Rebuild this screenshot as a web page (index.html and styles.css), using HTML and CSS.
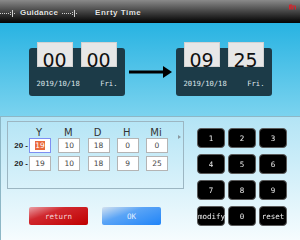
FILE: index.html
```html
<!DOCTYPE html>
<html lang="en">
<head>
    <meta charset="UTF-8">
    <title>Enrty Time</title>
    <link rel="stylesheet" href="styles.css">
</head>
<body>
    <div class="screen">
        <div class="topbar">
            <svg class="crumb" width="17" height="8" viewBox="0 0 17 8" shape-rendering="crispEdges">
                <rect x="0" y="4" width="1" height="1"/><rect x="2" y="4" width="1" height="1"/><rect x="4" y="4" width="1" height="1"/>
                <rect x="6" y="4" width="1" height="1"/><rect x="8" y="4" width="1" height="1"/>
                <rect x="10" y="3" width="1" height="1"/><rect x="10" y="5" width="1" height="1"/>
                <rect x="12" y="1" width="1" height="7"/><rect x="14" y="4" width="1" height="1"/>
            </svg>
            <span class="crumb-text">Guidance</span>
            <svg class="crumb second" width="17" height="8" viewBox="0 0 17 8" shape-rendering="crispEdges">
                <rect x="0" y="4" width="1" height="1"/><rect x="2" y="4" width="1" height="1"/><rect x="4" y="4" width="1" height="1"/>
                <rect x="6" y="4" width="1" height="1"/><rect x="8" y="4" width="1" height="1"/>
                <rect x="10" y="3" width="1" height="1"/><rect x="10" y="5" width="1" height="1"/>
                <rect x="12" y="1" width="1" height="7"/><rect x="14" y="4" width="1" height="1"/>
            </svg>
            <span class="crumb-text title">Enrty Time</span>
            <svg class="alert" width="7" height="6" viewBox="0 0 7 6">
                <path d="M0.5 5.5 V1 H3 V5.5 M1.7 1 V5.5 M4 5.5 V2 H6.5 V5.5" fill="none" stroke="#d8222a" stroke-width="1"/>
            </svg>
        </div>

        <div class="clocks">
            <div class="clock">
                <div class="tiles">
                    <div class="tile">00</div>
                    <div class="tile">00</div>
                </div>
                <div class="date"><span>2019/10/18</span><span>Fri.</span></div>
            </div>
            <svg class="arrow" width="43" height="12" viewBox="0 0 43 12">
                <rect x="0" y="4.5" width="35" height="3" fill="#000"/>
                <path d="M34 0 L43 6 L34 12 Z" fill="#000"/>
            </svg>
            <div class="clock">
                <div class="tiles">
                    <div class="tile">09</div>
                    <div class="tile">25</div>
                </div>
                <div class="date"><span>2019/10/18</span><span>Fri.</span></div>
            </div>
        </div>

        <div class="panel">
            <div class="left">
                <div class="entry">
                    <div class="entry-row head">
                        <span></span>
                        <span class="col">Y</span><span class="col">M</span><span class="col">D</span><span class="col">H</span><span class="col">Mi</span>
                    </div>
                    <div class="entry-row">
                        <span class="prefix">20 -</span>
                        <div class="field focus"><span class="sel">19</span></div>
                        <div class="field">10</div>
                        <div class="field">18</div>
                        <div class="field">0</div>
                        <div class="field">0</div>
                    </div>
                    <div class="entry-row second">
                        <span class="prefix">20 -</span>
                        <div class="field">19</div>
                        <div class="field">10</div>
                        <div class="field">18</div>
                        <div class="field">9</div>
                        <div class="field">25</div>
                    </div>
                    <span class="pointer"></span>
                </div>
                <div class="actions">
                    <button class="btn return">return</button>
                    <button class="btn ok">OK</button>
                </div>
            </div>

            <div class="keypad">
                <button class="key">1</button>
                <button class="key">2</button>
                <button class="key">3</button>
                <button class="key">4</button>
                <button class="key">5</button>
                <button class="key">6</button>
                <button class="key">7</button>
                <button class="key">8</button>
                <button class="key">9</button>
                <button class="key">modify</button>
                <button class="key">0</button>
                <button class="key">reset</button>
            </div>
        </div>
    </div>
</body>
</html>
```

FILE: styles.css
```css
body {
    margin: 0;
    padding: 0;
    font-family: "DejaVu Sans", sans-serif;
}
.screen {
    width: 300px;
    height: 240px;
    overflow: hidden;
}

/* title bar */
.topbar {
    height: 23px;
    box-sizing: border-box;
    padding-top: 2px;
    display: flex;
    align-items: center;
    background: linear-gradient(#8a8a8a, #444 50%, #101010 88%, #050505);
}
.crumb {
    fill: #cfcfcf;
    flex-shrink: 0;
}
.crumb.second {
    margin-left: 4px;
}
.crumb-text {
    font-family: "Liberation Sans", sans-serif;
    font-weight: bold;
    font-size: 8px;
    letter-spacing: 0.2px;
    color: #e6e6e6;
    text-shadow: 0 0 1px #000;
    margin-left: 3px;
}
.crumb-text.title {
    margin-left: 16px;
    letter-spacing: 0.5px;
}
.alert {
    margin-left: auto;
    margin-right: 4px;
    align-self: flex-start;
    margin-top: 2px;
}

/* clocks */
.clocks {
    height: 93px;
    box-sizing: border-box;
    padding-top: 25px;
    display: flex;
    justify-content: center;
    align-items: flex-start;
    gap: 4px;
    background: linear-gradient(#28b3e2, #7bd3ef);
}
.clock {
    width: 96px;
    height: 48px;
    box-sizing: border-box;
    background-color: #1c3b48;
    border-radius: 3px;
}
.tiles {
    display: flex;
    gap: 8px;
    padding: 0 8px;
    margin-top: -6px;
}
.tile {
    width: 36px;
    height: 25px;
    box-sizing: border-box;
    padding-top: 5px;
    line-height: 25px;
    text-align: center;
    font-size: 19px;
    color: #111;
    background-color: #e7e7e7;
    border: 1px solid #d2d2d2;
}
.date {
    display: flex;
    justify-content: space-between;
    padding: 0 7px 0 8px;
    margin-top: 12px;
    line-height: 10px;
    font-family: "DejaVu Sans Mono", monospace;
    font-size: 7.2px;
    color: #dfe6ea;
}
.arrow {
    margin-top: 18px;
}

/* lower panel */
.panel {
    height: 124px;
    box-sizing: border-box;
    border-top: 1px solid #8db7c6;
    border-left: 1px solid #8db7c6;
    display: flex;
    background: linear-gradient(#b3e4f5, #f6fcfe);
}
.left {
    width: 183px;
    padding: 4px 0 0 6px;
    box-sizing: border-box;
}
.entry {
    position: relative;
    width: 177px;
    height: 68px;
    box-sizing: border-box;
    border: 1px solid #9cb6c2;
    padding: 5px 0 0 0;
}
.entry-row {
    display: grid;
    grid-template-columns: 21px repeat(5, 29.25px);
    height: 15px;
    align-items: center;
}
.entry-row.head {
    height: 11px;
}
.entry-row.second {
    margin-top: 3px;
}
.col {
    width: 20px;
    text-align: center;
    font-size: 10px;
    color: #333;
    line-height: 11px;
}
.prefix {
    text-align: right;
    padding-right: 1px;
    font-family: "Liberation Sans", sans-serif;
    font-weight: bold;
    font-size: 8px;
    color: #222;
}
.field {
    width: 22px;
    height: 15px;
    box-sizing: border-box;
    border: 1px solid #b4b4b4;
    background-color: #fff;
    text-align: center;
    font-size: 7.5px;
    line-height: 13px;
    color: #444;
}
.field.focus {
    border-color: #7d8ff2;
}
.sel {
    display: inline-block;
    background-color: #e9683b;
    color: #fff;
    line-height: 9px;
    padding: 0 0.5px;
}
.pointer {
    position: absolute;
    left: 170px;
    top: 13px;
    width: 0;
    height: 0;
    border-left: 3px solid #8a9aa2;
    border-top: 2px solid transparent;
    border-bottom: 2px solid transparent;
}
.actions {
    display: flex;
    gap: 14px;
    margin: 18px 0 0 22px;
}
.btn {
    width: 59px;
    height: 18px;
    border: none;
    border-radius: 2px;
    padding: 0;
    font-family: "DejaVu Sans Mono", monospace;
    font-size: 7.5px;
}
.btn.return {
    background: linear-gradient(160deg, #eaa2a8 0%, #d0282e 35%, #c00000 100%);
    color: #f4d6d6;
}
.btn.ok {
    background: linear-gradient(160deg, #d4e2f0 0%, #5aa4f6 40%, #1f84f8 100%);
    color: #e4f0ff;
}

/* keypad */
.keypad {
    margin-left: 13px;
    padding-top: 11px;
    display: grid;
    grid-template-columns: repeat(3, 28px);
    grid-auto-rows: 20px;
    column-gap: 3px;
    row-gap: 6px;
    align-content: start;
    will-change: transform;
}
.key {
    background-color: #000;
    border: 1px solid #5a5a5a;
    border-radius: 4px;
    padding: 0;
    color: #eee;
    font-family: "DejaVu Sans Mono", monospace;
    font-size: 7.5px;
    -webkit-font-smoothing: antialiased;
}
```
